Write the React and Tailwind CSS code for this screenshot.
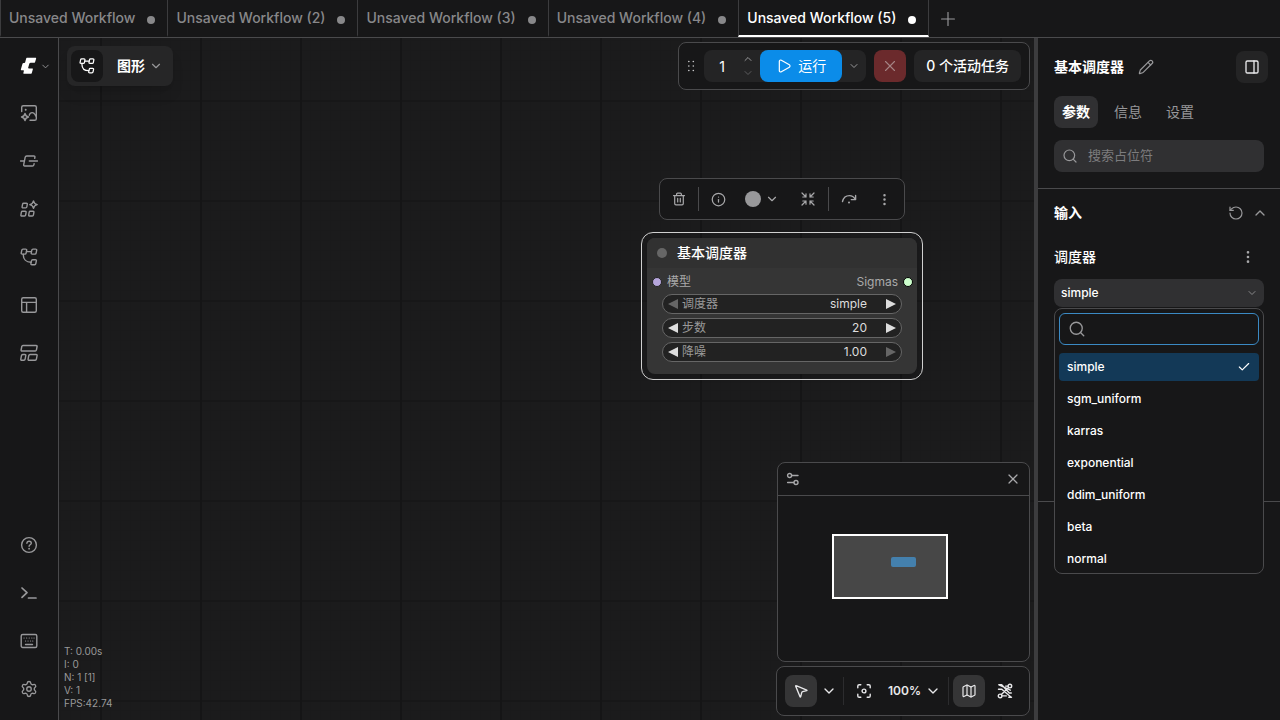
import React, { useState } from "react";
import {
  Check,
  ChevronDown,
  ChevronUp,
  EllipsisVertical,
  Info,
  Map as MapIcon,
  MousePointer2,
  PanelRight,
  Pencil,
  Play,
  Plus,
  RotateCcw,
  Search,
  Settings,
  Shrink,
  X,
} from "lucide-react";

function Svg({ size = 18, box = 18, className = "", children }) {
  return (
    <svg
      width={size}
      height={size}
      viewBox={`0 0 ${box} ${box}`}
      fill="none"
      stroke="currentColor"
      strokeWidth="1.4"
      strokeLinecap="round"
      strokeLinejoin="round"
      className={className}
      aria-hidden="true"
    >
      {children}
    </svg>
  );
}

const Logo = () => (
  <svg width="18" height="18" viewBox="0 0 18 18" fill="currentColor" aria-hidden="true">
    <path d="M6.900.8H15.400c.6 0 .9.400.7 1l-1 3.100c-.2.600-.6.800-1.200.800h-3.200c-.700 0-1.100.300-1.300.900l-1.200 4c-.1.500.1.900.7.900h3.300c.6 0 .8.400.6.900l-1 3.500c-.2.600-.6.900-1.200.900H4.200c-.7 0-1-.4-.8-1l.5-1.800c.1-.5-.1-.8-.6-.8H1.600c-.6 0-.9-.4-.7-1l1.600-5.500c.2-.6.500-.8 1.100-.8h.700c.5 0 .7-.200.900-.700l.9-3.500c.2-.6.4-.900.8-.900Z" />
  </svg>
);

const AssetsIcon = () => (
  <Svg>
    <path d="M1.700 7.500V3.300c0-1 .6-1.600 1.600-1.600h11.400c1 0 1.600.6 1.600 1.600v11.400c0 1-.6 1.600-1.600 1.600H10" />
    <circle cx="5.700" cy="5.700" r="1" fill="currentColor" stroke="none" />
    <path d="M9.300 11.200c.3-1.300 1.400-2.600 2.900-2.600s2.300 1 2.800 1.900l1.200 1.800" />
    <path d="M5 9.500c.5 2.300 1.200 3 3.500 3.500-2.300.5-3 1.200-3.500 3.500-.5-2.300-1.200-3-3.500-3.500 2.300-.5 3-1.200 3.500-3.500Z" />
  </Svg>
);

const NodeIcon = () => (
  <Svg>
    <path d="M.5 9h3.700M9.300 9h8.200" />
    <path d="m14.700 6.300.2-1.200c.1-.7-.3-1.100-1-1.100H6.700c-.8 0-1.300.4-1.500 1.200l-1.500 7.400c-.2.8.2 1.400 1 1.400h7.700c.8 0 1.300-.4 1.500-1.200l.2-1.200" />
  </Svg>
);

const ModelsIcon = () => (
  <Svg>
    <path d="M3.700 3.200h2.700c.7 0 1 .4.900 1L6.800 7c-.1.600-.5.900-1.100.9H3c-.7 0-1-.4-.9-1l.5-2.800c.1-.6.500-.9 1.100-.9ZM2.500 11.300h2.700c.7 0 1 .4.900 1l-.5 2.800c-.1.600-.5.900-1.100.9H1.800c-.7 0-1-.4-.9-1l.5-2.800c.1-.6.500-.9 1.100-.9ZM10.300 11.300H13c.7 0 1 .4.900 1l-.5 2.800c-.1.600-.5.900-1.100.9H9.600c-.7 0-1-.4-.9-1l.5-2.800c.1-.6.500-.9 1.100-.9Z" />
    <path d="M13.500.9c.5 2.500 1.200 3.200 3.700 3.700-2.500.5-3.200 1.200-3.700 3.700-.5-2.500-1.200-3.200-3.700-3.700 2.500-.5 3.200-1.200 3.700-3.700Z" />
  </Svg>
);

const WorkflowIcon = ({ size = 18 }) => (
  <Svg size={size}>
    <path d="M3 1.100h2.700c.7 0 1.100.4 1 1l-.6 3c-.1.600-.5 1-1.200 1H2.200c-.7 0-1.100-.4-1-1l.6-3c.1-.6.500-1 1.200-1ZM13 1.100h2.700c.7 0 1.100.4 1 1l-.6 3c-.1.600-.5 1-1.200 1h-2.700c-.7 0-1.100-.4-1-1l.6-3c.1-.6.500-1 1.200-1ZM12.700 11.700h2.700c.7 0 1.100.4 1 1l-.6 3c-.1.600-.5 1-1.200 1h-2.700c-.7 0-1.100-.4-1-1l.6-3c.1-.6.500-1 1.200-1Z" />
    <path d="M6.500 3.600h4.700M3.300 6.100v.8c0 4.200 2.700 7.300 7.700 7.300" />
  </Svg>
);

const TemplatesIcon = () => (
  <Svg>
    <rect x="1.700" y="1.700" width="14.600" height="14.600" rx="1.500" />
    <path d="M1.700 6.400h14.600M6.600 6.400v9.900" />
  </Svg>
);

const AppsIcon = () => (
  <Svg>
    <path d="M3 1.500h13.200c.7 0 1 .4.900 1l-.7 3.500c-.1.600-.5 1-1.200 1H2c-.7 0-1-.4-.9-1l.7-3.500c.1-.6.500-1 1.200-1ZM2.700 10.500h2.200c.7 0 1 .4.900 1l-.7 3.700c-.1.600-.5 1-1.200 1H1.700c-.7 0-1-.4-.9-1l.7-3.700c.1-.6.500-1 1.200-1ZM10 10.500h6.200c.7 0 1 .4.900 1l-.7 3.700c-.1.600-.5 1-1.200 1H9c-.7 0-1-.4-.9-1l.7-3.700c.1-.6.500-1 1.200-1Z" />
  </Svg>
);

const HelpIcon = () => (
  <Svg>
    <circle cx="9" cy="9" r="7.400" />
    <path d="M6.900 7.200c.1-1.200 1-1.900 2.200-1.900s2.200.8 2.200 1.900c0 1.500-2.200 1.700-2.200 3.100" />
    <circle cx="9.100" cy="12.700" r=".9" fill="currentColor" stroke="none" />
  </Svg>
);

const TerminalIcon = () => (
  <Svg>
    <path d="m2 4 5 4.700-5 4.700M8.500 14H16" strokeWidth="1.700" />
  </Svg>
);

const KeyboardIcon = () => (
  <Svg>
    <rect x="1.200" y="2.500" width="15.600" height="13" rx="1.500" />
    <path d="M5.500 12.500h7" />
    <path d="M4 6h.1M6.600 6h.1M9.200 6h.1M11.800 6h.1M14 6h.1M5.500 9h.1M8 9h.1M10.500 9h.1M12.700 9h.1" strokeWidth="1.200" />
  </Svg>
);

const TrashIcon = () => (
  <Svg size={14} box={14}>
    <path d="M1.500 3.600h11M4.600 3.400V2.200c0-.6.400-1 1-1h2.800c.6 0 1 .4 1 1v1.200M2.700 3.800v7.700c0 .8.500 1.300 1.300 1.300h6c.8 0 1.300-.5 1.300-1.300V3.800M5.700 6.400v3.500M8.300 6.400v3.500" strokeWidth="1.200" />
  </Svg>
);

const BypassIcon = () => (
  <Svg size={16} box={16}>
    <path d="M1.500 10.500C2.500 6.500 5.300 4.600 8.400 4.600c2.600 0 4.400 1.200 5.700 3.700M14.600 4.400v4.200h-4.300" />
    <circle cx="8" cy="11.600" r="1" fill="currentColor" stroke="none" />
  </Svg>
);

const SlidersIcon = () => (
  <Svg size={14} box={14}>
    <circle cx="3.600" cy="3.500" r="2" />
    <path d="M5.800 3.500H12M1.600 10.500h6" />
    <circle cx="10" cy="10.500" r="2" />
  </Svg>
);

const HiddenLinksIcon = () => (
  <Svg size={16} box={16}>
    <circle cx="12.900" cy="3.100" r="1.800" />
    <circle cx="3.100" cy="12.900" r="1.800" />
    <path d="M13.300 7.200 2 1.800M1.500 6.200h3.300l9.400 8M14.500 14.200h-2.700M1.800 1.800h2.900l7.600 8.200h2M11.600 4.400 4.400 11.600M5 12.900h4.300M11 3.100H8.600" />
  </Svg>
);

const FitIcon = () => (
  <Svg size={16} box={16}>
    <path d="M1.800 4.800V3.100c0-.8.5-1.300 1.300-1.300h1.700M11.200 1.800h1.700c.8 0 1.300.5 1.300 1.300v1.700M14.200 11.200v1.700c0 .8-.5 1.300-1.300 1.300h-1.700M4.800 14.200H3.100c-.8 0-1.300-.5-1.300-1.300v-1.700" />
    <circle cx="8" cy="8" r="1.900" />
  </Svg>
);

const Grip = () => (
  <svg width="10" height="14" viewBox="0 0 10 14" fill="currentColor" aria-hidden="true">
    {[2, 7, 12].flatMap((y) => [2, 7].map((x) => <circle key={`${x}-${y}`} cx={x} cy={y} r=".9" />))}
  </svg>
);

const tabs = ["Unsaved Workflow", "Unsaved Workflow (2)", "Unsaved Workflow (3)", "Unsaved Workflow (4)", "Unsaved Workflow (5)"];

function TopTabs() {
  return (
    <header className="flex h-[38px] shrink-0 border-b border-[#4a4a4c]">
      <div role="tablist" className="flex">
        {tabs.map((name, i) => {
          const active = i === tabs.length - 1;
          return (
            <button
              key={name}
              role="tab"
              aria-selected={active}
              className={
                "flex items-center gap-3 border-l border-b-2 border-l-[#3c3c3e] pl-2 pr-3 text-sm font-medium whitespace-nowrap " +
                (active ? "border-r border-r-[#3c3c3e] border-b-white text-white" : "border-b-transparent text-[#88888a]")
              }
            >
              <span>{name}</span>
              <span className={"mt-1 size-2 rounded-full " + (active ? "bg-white" : "bg-[#88888a]")} />
            </button>
          );
        })}
      </div>
      <button aria-label="New" className="flex w-[38px] items-center justify-center text-[#9a9a9c]">
        <Plus size={22} strokeWidth={1.25} />
      </button>
    </header>
  );
}

function SideButton({ label, children }) {
  return (
    <button aria-label={label} className="flex h-12 w-full items-center justify-center text-[#98989a]">
      {children}
    </button>
  );
}

function Sidebar() {
  return (
    <nav className="flex w-[59px] shrink-0 flex-col justify-between border-r border-[#4a4a4c] pt-[5px] pb-[7px]">
      <div>
        <button aria-label="Menu" className="flex h-[46px] w-full items-center gap-0.5 pl-5 text-white">
          <Logo />
          <ChevronDown size={11} className="text-[#98989a]" />
        </button>
        <SideButton label="Assets"><AssetsIcon /></SideButton>
        <SideButton label="Nodes"><NodeIcon /></SideButton>
        <SideButton label="Models"><ModelsIcon /></SideButton>
        <SideButton label="Workflows"><WorkflowIcon /></SideButton>
        <SideButton label="Templates"><TemplatesIcon /></SideButton>
        <SideButton label="Apps"><AppsIcon /></SideButton>
      </div>
      <div>
        <SideButton label="Help"><HelpIcon /></SideButton>
        <SideButton label="Console"><TerminalIcon /></SideButton>
        <SideButton label="Shortcuts"><KeyboardIcon /></SideButton>
        <SideButton label="Settings"><Settings size={18} strokeWidth={1.8} /></SideButton>
      </div>
    </nav>
  );
}

function Breadcrumb() {
  return (
    <div className="mt-1 ml-1 flex h-10 items-center rounded-lg bg-[#262627] p-1 shadow-lg">
      <button aria-label="Workflow" className="flex size-8 items-center justify-center rounded-lg bg-[#171718] text-white">
        <WorkflowIcon size={16} />
      </button>
      <button className="flex h-8 items-center gap-1 pr-1.5 pl-3.5 text-sm font-bold text-white">
        图形
        <ChevronDown size={14} className="text-[#98989a]" />
      </button>
    </div>
  );
}

function ActionBar() {
  const [count, setCount] = useState(1);
  return (
    <div className="flex h-12 items-center gap-2 rounded-lg border border-[#4a4a4c] bg-[#171718] px-2">
      <span className="flex w-[9px] justify-center text-[#c8c8ca]"><Grip /></span>
      <div className="flex h-8 items-center rounded-lg bg-[#242425]">
        <input
          aria-label="Batch count"
          value={count}
          onChange={(e) => setCount(Number(e.target.value) || 1)}
          className="h-8 w-9 bg-transparent text-center text-sm text-white outline-none"
        />
        <div className="flex w-5 flex-col items-center gap-0.5 pr-1 text-[#98989a]">
          <button aria-label="Increase" onClick={() => setCount(count + 1)}><ChevronUp size={12} /></button>
          <button aria-label="Decrease" onClick={() => setCount(Math.max(1, count - 1))} className="text-[#5c5c5e]"><ChevronDown size={12} /></button>
        </div>
        <button className="flex h-8 w-[82px] items-center justify-center gap-1.5 rounded-lg bg-[#0b8ce9] text-sm text-white">
          <Play size={16} strokeWidth={1.8} />
          运行
        </button>
        <button aria-label="Run options" className="flex h-8 w-6 items-center justify-center text-[#98989a]">
          <ChevronDown size={12} />
        </button>
      </div>
      <button aria-label="Cancel" className="flex size-8 items-center justify-center rounded-lg bg-[#6b2a2c] text-[#a58586]">
        <X size={18} strokeWidth={1.5} />
      </button>
      <button className="h-8 rounded-lg bg-[#242425] px-3 text-sm font-medium text-white">0 个活动任务</button>
    </div>
  );
}

function SelectionToolbox() {
  return (
    <div className="absolute top-[140px] left-[600px] flex h-[42px] w-[246px] items-center rounded-lg border border-[#4a4a4c] bg-[#171718] text-[#a8a8aa]">
      <button aria-label="Delete" className="flex w-[38px] justify-center"><TrashIcon /></button>
      <span className="h-6 w-px bg-[#4a4a4c]" />
      <button aria-label="Info" className="flex w-[38px] justify-center"><Info size={15} strokeWidth={2} /></button>
      <button aria-label="Color" className="flex w-[50px] items-center justify-center gap-1">
        <span className="size-4 rounded-full bg-[#98989a]" />
        <ChevronDown size={14} />
      </button>
      <button aria-label="Collapse" className="flex w-[41px] justify-center"><Shrink size={16} strokeWidth={1.8} /></button>
      <span className="h-6 w-px bg-[#4a4a4c]" />
      <button aria-label="Bypass" className="flex w-[39px] justify-center"><BypassIcon /></button>
      <button aria-label="More" className="flex w-8 justify-center"><EllipsisVertical size={15} /></button>
    </div>
  );
}

const Arrow = ({ right, dim }) => (
  <svg width="10" height="10" viewBox="0 0 10 10" className={dim ? "text-[#666666]" : "text-[#dddddd]"} fill="currentColor" aria-hidden="true">
    {right ? <path d="M0 0v10l10-5Z" /> : <path d="M10 0v10L0 5Z" />}
  </svg>
);

function Widget({ id, label, value, dimLeft, dimRight }) {
  return (
    <div className="flex h-5 items-center rounded-full border border-[#666666] bg-[#222222] px-[5px] text-xs">
      <button aria-label={label + " -"}><Arrow dim={dimLeft} /></button>
      <label htmlFor={id} className="shrink-0 pl-1 text-[#999999]">{label}</label>
      <input
        id={id}
        defaultValue={value}
        className="min-w-0 flex-1 bg-transparent pr-[19px] text-right text-[#dddddd] outline-none"
      />
      <button aria-label={label + " +"}><Arrow right dim={dimRight} /></button>
    </div>
  );
}

function GraphNode() {
  return (
    <article className="absolute top-[194px] left-[582px] w-[282px] rounded-xl border border-[#d0d0d0] p-[5px]">
      <div className="overflow-hidden rounded-lg bg-[#353535] shadow-md">
        <h2 className="flex h-[30px] items-center gap-2.5 bg-[#313131] pl-2.5 text-sm font-medium text-white">
          <span className="size-2.5 rounded-full bg-[#666666]" />
          基本调度器
        </h2>
        <div className="mt-1 flex h-5 items-center justify-between px-1 pl-[5px] text-xs text-[#aaaaaa]">
          <span className="flex items-center gap-[5px]"><i className="size-2.5 rounded-full border border-[#222222] bg-[#b5a5db]" />模型</span>
          <span className="flex items-center gap-[5px]">Sigmas<i className="size-2.5 rounded-full border border-black bg-[#cdffcd]" /></span>
        </div>
        <div className="flex flex-col gap-1 px-[15px] pt-0.5 pb-3">
          <Widget id="widget-scheduler" label="调度器" value="simple" dimLeft />
          <Widget id="widget-steps" label="步数" value="20" />
          <Widget id="widget-denoise" label="降噪" value="1.00" dimRight />
        </div>
      </div>
    </article>
  );
}

function Minimap() {
  return (
    <section className="ml-px flex h-[200px] flex-col rounded-lg border border-[#4a4a4c] bg-[#171718]">
      <div className="flex h-[33px] items-center justify-between border-b border-[#4a4a4c] px-2 text-[#a8a8aa]">
        <button aria-label="Minimap options"><SlidersIcon /></button>
        <button aria-label="Close minimap"><X size={16} strokeWidth={1.8} /></button>
      </div>
      <div className="relative flex-1">
        <div className="absolute top-[38px] left-[54px] h-[65px] w-[116px] border-2 border-white bg-[#474747]">
          <div className="absolute top-[21px] left-[57px] h-[10px] w-[25px] rounded-xs bg-[#4480ad]" />
        </div>
      </div>
    </section>
  );
}

function ViewControls() {
  return (
    <div className="flex h-[50px] items-center rounded-lg border border-[#4a4a4c] bg-[#171718] px-2 text-[#e8e8ea]">
      <button aria-label="Select" className="flex size-8 items-center justify-center rounded-lg bg-[#353536]"><MousePointer2 size={16} strokeWidth={2} /></button>
      <button aria-label="Pointer mode" className="flex w-[26px] justify-center pr-0.5"><ChevronDown size={16} /></button>
      <span className="h-7 w-px bg-[#2c2c2e]" />
      <button aria-label="Fit view" className="flex w-10 justify-center"><FitIcon /></button>
      <button className="flex flex-1 items-center gap-1 pl-1 text-xs font-semibold">100%<ChevronDown size={16} /></button>
      <span className="mr-1 h-7 w-px bg-[#2c2c2e]" />
      <button aria-label="Minimap" className="flex size-8 items-center justify-center rounded-lg bg-[#353536]"><MapIcon size={16} strokeWidth={1.8} /></button>
      <button aria-label="Links" className="ml-1 flex size-8 items-center justify-center"><HiddenLinksIcon /></button>
    </div>
  );
}

function Canvas() {
  return (
    <main className="relative flex min-w-0 flex-1 flex-col justify-between overflow-hidden bg-[#1b1b1c] bg-[linear-gradient(to_right,#151516_2px,transparent_2px),linear-gradient(to_bottom,#171718_2px,transparent_2px),linear-gradient(to_right,#1a1a1b_1px,transparent_1px),linear-gradient(to_bottom,#1a1a1b_1px,transparent_1px)] bg-[size:100px_100px,100px_100px,10px_10px,10px_10px] bg-[position:41px_62px,41px_62px,41px_62px,41px_62px] p-1">
      <div className="flex items-start justify-between">
        <Breadcrumb />
        <ActionBar />
      </div>
      <SelectionToolbox />
      <GraphNode />
      <div className="flex items-end justify-between">
        <div className="pb-1.5 pl-px text-[10px] leading-[13px] text-[#999999]">
          <p>T: 0.00s</p>
          <p>I: 0</p>
          <p>N: 1 [1]</p>
          <p>V: 1</p>
          <p>FPS:42.74</p>
        </div>
        <div className="flex w-[254px] flex-col gap-1">
          <Minimap />
          <ViewControls />
        </div>
      </div>
    </main>
  );
}

const schedulers = ["simple", "sgm_uniform", "karras", "exponential", "ddim_uniform", "beta", "normal"];

function SchedulerField() {
  const [value, setValue] = useState("simple");
  return (
    <div>
      <div className="flex h-8 items-center justify-between pr-2 text-sm font-medium text-white">
        <label htmlFor="scheduler">调度器</label>
        <button aria-label="More" className="text-[#a8a8aa]"><EllipsisVertical size={16} /></button>
      </div>
      <div className="relative mt-1.5">
        <select
          id="scheduler"
          value={value}
          onChange={(e) => setValue(e.target.value)}
          className="block h-7 w-full appearance-none rounded-lg bg-[#303032] px-[7px] text-xs font-medium text-white outline-none"
        >
          {schedulers.map((s) => <option key={s}>{s}</option>)}
        </select>
        <ChevronDown size={12} className="pointer-events-none absolute top-2 right-1.5 text-[#88888a]" />
        <div className="absolute inset-x-0 top-[29px] z-10 rounded-lg border border-[#4a4a4c] bg-[#171718] px-1 pt-1">
          <label className="flex h-8 items-center rounded-md border border-[#3b8ac4] px-2 text-[#98989a]">
            <Search size={18} strokeWidth={1.8} />
            <input aria-label="Filter" className="min-w-0 flex-1 bg-transparent pl-2 text-xs text-white outline-none" />
          </label>
          <ul role="listbox" className="mt-2 flex flex-col gap-1">
            {schedulers.map((s) => (
              <li key={s} role="option" aria-selected={s === value}>
                <button
                  onClick={() => setValue(s)}
                  className={"flex h-7 w-full items-center justify-between rounded-sm px-2 text-xs font-medium text-white " + (s === value ? "bg-[#133957]" : "")}
                >
                  {s}
                  {s === value && <Check size={14} />}
                </button>
              </li>
            ))}
          </ul>
        </div>
      </div>
    </div>
  );
}

function PropertiesPanel() {
  return (
    <aside className="w-[246px] shrink-0 border-l-4 border-[#3c3c3e] bg-[#171718]">
      <div className="border-b border-[#4a4a4c] px-4 pt-[13px] pb-4">
        <div className="-mr-1 flex h-8 items-center justify-between">
          <div className="flex items-center gap-3.5">
            <h1 className="text-sm font-bold text-white">基本调度器</h1>
            <button aria-label="Rename" className="text-[#98989a]"><Pencil size={16} strokeWidth={1.8} /></button>
          </div>
          <button aria-label="Toggle panel" className="flex size-8 items-center justify-center rounded-lg bg-[#242425] text-[#e8e8ea]"><PanelRight size={16} /></button>
        </div>
        <div role="tablist" className="mt-[13px] flex gap-2 text-sm">
          <button role="tab" aria-selected="true" className="h-8 rounded-lg bg-[#303032] px-2 font-bold text-white">参数</button>
          <button role="tab" aria-selected="false" className="h-8 rounded-lg px-2 text-[#98989a]">信息</button>
          <button role="tab" aria-selected="false" className="h-8 rounded-lg px-2 text-[#98989a]">设置</button>
        </div>
        <label className="mt-3 flex h-8 items-center gap-2.5 rounded-lg bg-[#303032] px-2 text-[#98989a]">
          <Search size={16} strokeWidth={1.8} />
          <input aria-label="搜索" placeholder="搜索占位符" className="min-w-0 flex-1 bg-transparent text-[13px] text-white outline-none placeholder:text-[#7c7c7e]" />
        </label>
      </div>
      <section className="min-h-[313px] border-b border-[#4a4a4c] px-4">
        <div className="flex h-12 items-center justify-between">
          <h2 className="text-sm font-bold text-white">输入</h2>
          <div className="-mr-1 flex items-center gap-2 text-[#98989a]">
            <button aria-label="Reset"><RotateCcw size={16} strokeWidth={1.8} /></button>
            <button aria-label="Collapse"><ChevronUp size={16} /></button>
          </div>
        </div>
        <div className="pt-1">
          <SchedulerField />
        </div>
      </section>
    </aside>
  );
}

export default function App() {
  return (
    <div className="flex h-screen flex-col overflow-hidden bg-[#171718] font-['Inter','Noto_Sans_CJK_SC',sans-serif]">
      <TopTabs />
      <div className="flex min-h-0 flex-1">
        <Sidebar />
        <Canvas />
        <PropertiesPanel />
      </div>
    </div>
  );
}
